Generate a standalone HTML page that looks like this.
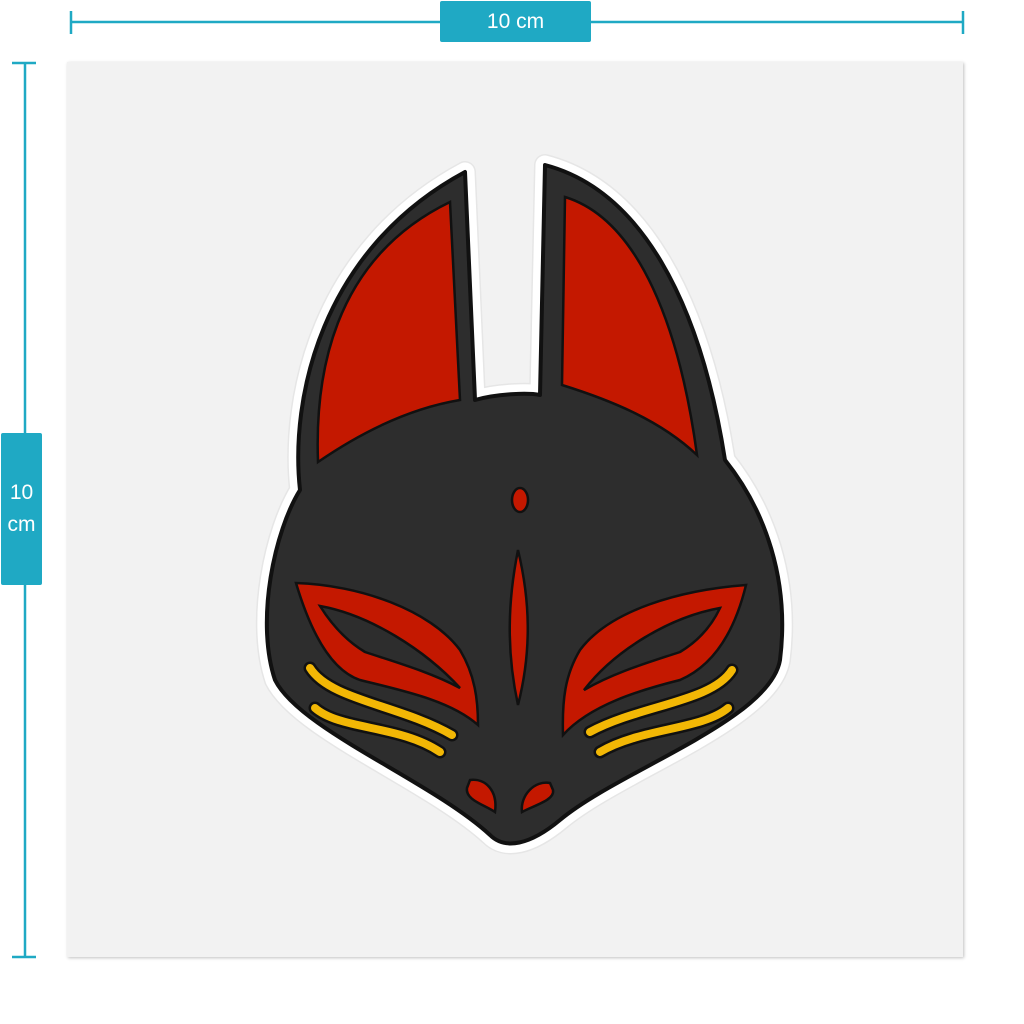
<!DOCTYPE html>
<html><head><meta charset="utf-8"><style>
html,body{margin:0;padding:0;background:#fff;width:1024px;height:1024px;overflow:hidden;font-family:"Liberation Sans",sans-serif}
.sheet{position:absolute;left:67px;top:62px;width:896px;height:895px;background:#f2f2f2;box-shadow:1px 1px 3px rgba(0,0,0,.25)}
.lbl{position:absolute;background:#1fa9c4;color:#fff;font-size:21px;text-align:center;border-radius:2px}
</style></head><body>
<svg width="1024" height="1024" style="position:absolute;left:0;top:0" >
<g stroke="#1fa9c4" stroke-width="2.5">
<line x1="71" y1="22" x2="963" y2="22"/><line x1="71" y1="11" x2="71" y2="34"/><line x1="963" y1="11" x2="963" y2="34"/>
<line x1="25" y1="63" x2="25" y2="957"/><line x1="12" y1="63" x2="36" y2="63"/><line x1="12" y1="957" x2="36" y2="957"/>
</g></svg>
<div class="sheet"></div>
<div class="lbl" style="left:440px;top:1px;width:151px;height:41px;line-height:41px">10 cm</div>
<div class="lbl" style="left:1px;top:433px;width:41px;height:152px;line-height:32px;padding-top:44px;box-sizing:border-box">10<br>cm</div>
<svg width="1024" height="1024" style="position:absolute;left:0;top:0">
<defs><path id="m" d="M300,490 C290,400 320,250 465,172 L475,400 C500,393 530,393 540,395 L545,165 C640,190 700,300 725,460 C765,510 790,580 780,660 C770,720 620,770 560,820 C530,845 505,850 490,835 C430,780 300,730 275,680 C255,620 275,530 300,490 Z"/></defs>
<use href="#m" fill="#fff" stroke="#e6e6e6" stroke-width="22" stroke-linejoin="round"/>
<use href="#m" fill="#fff" stroke="#fff" stroke-width="19" stroke-linejoin="round"/>
<use href="#m" fill="#2d2d2d" stroke="#111" stroke-width="4" stroke-linejoin="round"/>
<g fill="#c41800" stroke="#111" stroke-width="2.5">
<path d="M318,462 C315,380 330,260 450,202 L460,400 C400,410 350,440 318,462 Z"/>
<path d="M565,197 C640,220 680,330 697,455 C660,420 610,400 562,385 Z"/>
<ellipse cx="520" cy="500" rx="8" ry="12"/>
<path d="M518,550 C530,600 532,650 518,705 C506,650 508,600 518,550 Z"/>
<path d="M296,583 C360,585 430,610 460,650 C475,675 478,700 478,725 C450,700 400,690 360,680 C330,670 310,630 296,583 Z"/>
<path d="M746,585 C680,590 610,610 580,650 C565,675 562,700 563,735 C590,705 640,690 680,680 C715,665 735,630 746,585 Z"/>
<path d="M470,780 C485,778 498,790 495,812 C485,805 465,800 467,788 Z"/>
<path d="M550,783 C535,780 520,795 522,812 C535,805 555,800 553,790 Z"/>
</g>
<g fill="#2d2d2d" stroke="#111" stroke-width="2.5">
<path d="M320,606 C370,615 425,650 460,688 C430,672 395,662 365,652 C345,640 330,622 320,606 Z"/>
<path d="M720,608 C670,617 615,650 584,690 C615,672 650,662 680,652 C700,640 712,625 720,608 Z"/>
</g>
<g fill="none" stroke="#111" stroke-width="13" stroke-linecap="round">
<path d="M310,668 C330,700 400,705 452,735"/><path d="M315,708 C340,730 400,725 440,752"/>
<path d="M732,670 C712,702 640,705 590,732"/><path d="M728,708 C702,730 640,728 600,752"/>
</g>
<g fill="none" stroke="#f2b705" stroke-width="8" stroke-linecap="round">
<path d="M310,668 C330,700 400,705 452,735"/><path d="M315,708 C340,730 400,725 440,752"/>
<path d="M732,670 C712,702 640,705 590,732"/><path d="M728,708 C702,730 640,728 600,752"/>
</g>
</svg>
</body></html>
